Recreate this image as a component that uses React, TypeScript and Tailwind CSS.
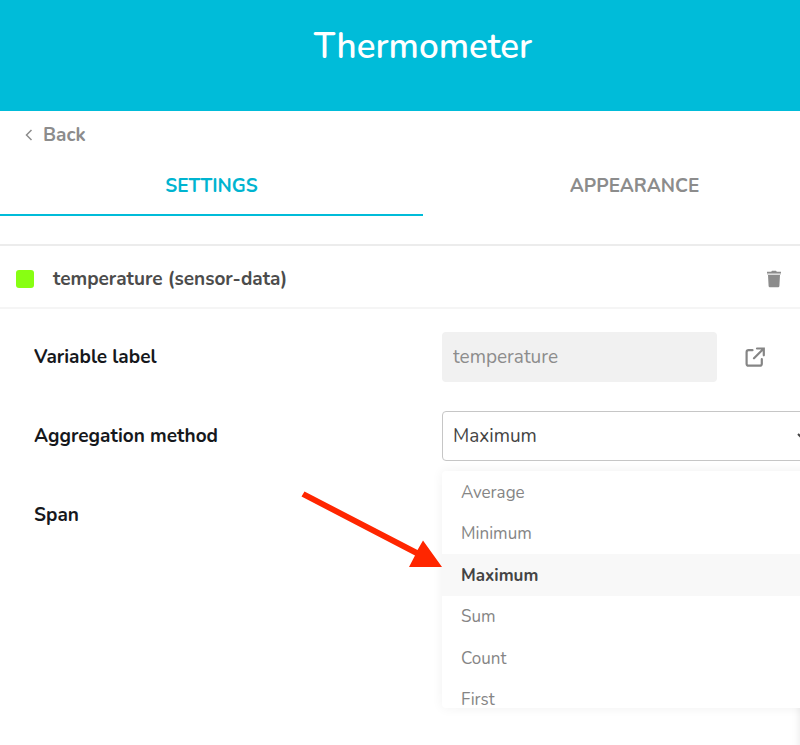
import { useState } from "react";

const METHODS = ["Average", "Minimum", "Maximum", "Sum", "Count", "First"];

function BackLink() {
  return (
    <a href="#" className="inline-flex items-center gap-2 text-[19px] leading-6 font-bold text-[#8c8c8c]">
      <svg width="12" height="14" viewBox="0 0 12 14" fill="none" stroke="currentColor" strokeWidth="1.5" aria-hidden="true">
        <path d="M8.500 2 3.500 7l5 5" />
      </svg>
      Back
    </a>
  );
}

function Tabs() {
  const [tab, setTab] = useState("settings");
  const base = "h-[61px] flex-1 border-b-2 pt-[2px] text-[19px] leading-6 font-bold uppercase";
  const on = "border-[#00bcd9] text-[#00b4d0]";
  const off = "border-transparent text-[#8c8c8c]";
  return (
    <div role="tablist" className="flex">
      <button role="tab" aria-selected={tab === "settings"} onClick={() => setTab("settings")} className={`${base} ${tab === "settings" ? on : off}`}>
        Settings
      </button>
      <button role="tab" aria-selected={tab === "appearance"} onClick={() => setTab("appearance")} className={`${base} ${tab === "appearance" ? on : off}`}>
        Appearance
      </button>
    </div>
  );
}

function VariableHeader() {
  return (
    <div className="mt-7 flex h-[65px] items-center border-t-2 border-b-2 border-t-[#ececec] border-b-[#f5f5f5] pt-1 pr-16 pl-4">
      <span className="size-[18px] rounded-[3px] bg-[#88ff12]" />
      <h2 className="ml-[19px] flex-1 text-[19px] leading-6 font-bold text-[#4c4c4c]">temperature (sensor-data)</h2>
      <button aria-label="Delete variable" className="text-[#8c8c8c]">
        <svg width="16" height="18" viewBox="0 0 16 18" fill="currentColor" aria-hidden="true">
          <path d="M1 1.800h4.200L6 .8h4l.8 1H15v1.700H1z" />
          <path d="M1 3.500h14V5H1z" opacity=".3" />
          <path d="M2 5h12l-.6 11a1.300 1.300 0 0 1-1.300 1.200H3.900A1.300 1.300 0 0 1 2.600 16z" />
        </svg>
      </button>
    </div>
  );
}

function ExternalIcon() {
  return (
    <svg width="22" height="22" viewBox="0 0 22 22" fill="none" stroke="currentColor" strokeWidth="2.2" strokeLinecap="round" aria-hidden="true">
      <path d="M8.500 4.200H4.600a2 2 0 0 0-2 2v11.500a2 2 0 0 0 2 2h11.200a2 2 0 0 0 2-2v-4.500" />
      <path d="M13 2.500h6.800v6.800M19.300 3l-9.300 9.300" />
    </svg>
  );
}

function AggregationSelect() {
  const [method, setMethod] = useState("Maximum");
  return (
    <div className="relative w-[380px]">
      <select
        id="aggregation"
        value={method}
        onChange={(e) => setMethod(e.target.value)}
        className="block h-[50px] w-full appearance-none rounded-[4px] border border-[#c6c6c6] bg-white px-[10px] text-[19px] text-[#444444]"
      >
        {METHODS.map((m) => (
          <option key={m}>{m}</option>
        ))}
      </select>
      <svg className="pointer-events-none absolute top-5 right-3 text-[#444444]" width="14" height="10" viewBox="0 0 14 10" fill="none" stroke="currentColor" strokeWidth="2" aria-hidden="true">
        <path d="M2 3l5 5 5-5" />
      </svg>
      <div className="absolute top-[60px] left-0 z-10 h-[237px] w-full overflow-hidden rounded-[4px] bg-white shadow-[0_0_12px_rgba(0,0,0,0.06)]">
        <ul role="listbox" aria-label="Aggregation method" className="grid h-[249px] grid-rows-6">
          {METHODS.map((m) => (
            <li key={m} role="option" aria-selected={m === method} className="grid">
              <button
                onClick={() => setMethod(m)}
                className={`px-[19px] pt-[2px] text-left text-[17px] leading-4 ${
                  m === method ? "bg-[#f8f8f8] font-bold text-[#444444]" : "text-[#858585]"
                }`}
              >
                {m}
              </button>
            </li>
          ))}
        </ul>
      </div>
    </div>
  );
}

function Pointer() {
  return (
    <svg className="pointer-events-none absolute top-[488px] left-[298px] z-20" width="148" height="84" viewBox="298 488 148 84" fill="#ff2600" aria-hidden="true">
      <path d="M304.500 491.500 417.500 550 423 540.500 442 567 409 567 415 555.500 301.500 496.500z" />
    </svg>
  );
}

export default function App() {
  const label = "w-[408px] shrink-0 text-[19px] leading-6 font-bold text-[#16181c]";
  return (
    <div className="relative min-h-screen overflow-hidden bg-white font-['Nunito','Lato',sans-serif]">
      <main className="w-[calc(100%+46px)]">
        <header className="bg-[#00bcd9] pt-[21px] pb-[38px] text-center">
          <h1 className="text-[35px] leading-[52px] font-[650] text-white">Thermometer</h1>
        </header>
        <nav className="px-[23px] pt-3 pb-[6px] leading-6">
          <BackLink />
        </nav>
        <Tabs />
        <VariableHeader />
        <form className="flex flex-col gap-[29px] pt-[23px] pl-[34px]" onSubmit={(e) => e.preventDefault()}>
          <div className="flex h-[50px] items-center">
            <label htmlFor="variable" className={label}>Variable label</label>
            <input
              id="variable"
              readOnly
              defaultValue="temperature"
              className="h-[50px] w-[275px] rounded-[4px] bg-[#f1f1f1] px-[11px] text-[19px] text-[#8c8c8c]"
            />
            <button type="button" aria-label="Open variable" className="ml-[27px] text-[#858585]">
              <ExternalIcon />
            </button>
          </div>
          <div className="flex h-[50px] items-center">
            <label htmlFor="aggregation" className={label}>Aggregation method</label>
            <AggregationSelect />
          </div>
          <div className="flex h-[50px] items-center">
            <span className={label}>Span</span>
          </div>
        </form>
      </main>
      <Pointer />
      <div className="absolute right-[-10px] bottom-[-10px] h-[98px] w-[10px] shadow-[0_0_8px_rgba(0,0,0,0.1)]" />
    </div>
  );
}
